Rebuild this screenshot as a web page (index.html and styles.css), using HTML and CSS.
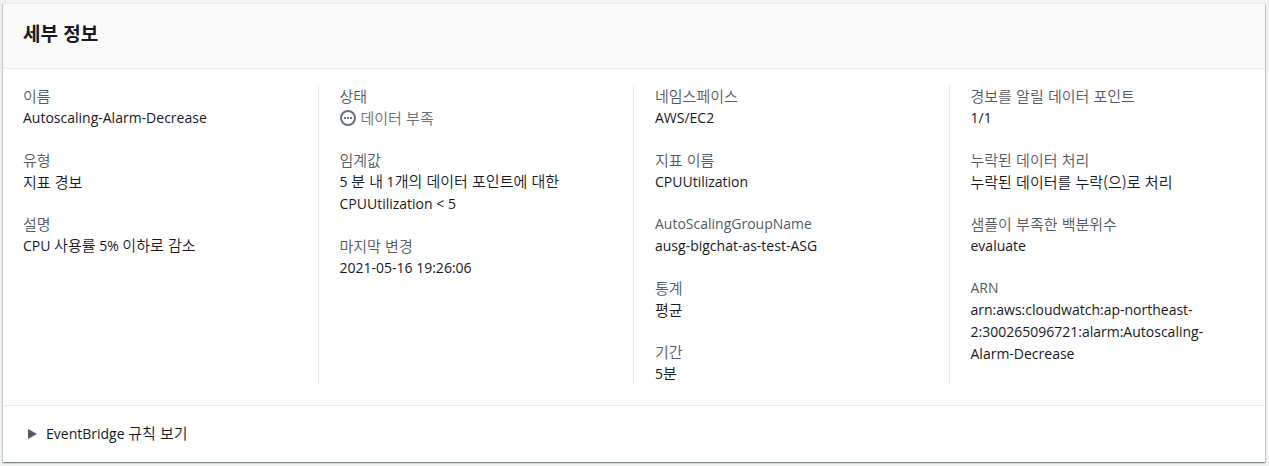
FILE: index.html
```html
<!DOCTYPE html>
<html lang="ko">
<head>
    <meta charset="UTF-8">
    <meta name="viewport" content="width=device-width, initial-scale=1.0">
    <title>세부 정보</title>
    <link rel="stylesheet" href="styles.css">
</head>
<body>

    <section class="card">
        <header class="card-header">
            <h2>세부 정보</h2>
        </header>

        <div class="columns">
            <!-- Alarm -->
            <dl class="column">
                <div class="field">
                    <dt class="ko">이름</dt>
                    <dd>Autoscaling-Alarm-Decrease</dd>
                </div>
                <div class="field">
                    <dt class="ko">유형</dt>
                    <dd class="ko">지표 경보</dd>
                </div>
                <div class="field">
                    <dt class="ko">설명</dt>
                    <dd>CPU <span class="ko">사용률</span> 5% <span class="ko">이하로 감소</span></dd>
                </div>
            </dl>

            <!-- State -->
            <dl class="column">
                <div class="field">
                    <dt class="ko">상태</dt>
                    <dd class="ko status">
                        <svg class="status-icon" viewBox="0 0 16 16" aria-hidden="true">
                            <circle cx="8" cy="8" r="7" fill="none" stroke="currentColor" stroke-width="2"/>
                            <path d="M4 7h2v2H4zM7 7h2v2H7zM10 7h2v2h-2z" fill="currentColor"/>
                        </svg>
                        데이터 부족
                    </dd>
                </div>
                <div class="field">
                    <dt class="ko">임계값</dt>
                    <dd>5 <span class="ko">분 내</span> 1<span class="ko">개의 데이터 포인트에 대한</span> CPUUtilization &lt; 5</dd>
                </div>
                <div class="field">
                    <dt class="ko">마지막 변경</dt>
                    <dd>2021-05-16 19:26:06</dd>
                </div>
            </dl>

            <!-- Metric -->
            <dl class="column">
                <div class="field">
                    <dt class="ko">네임스페이스</dt>
                    <dd>AWS/EC2</dd>
                </div>
                <div class="field">
                    <dt class="ko">지표 이름</dt>
                    <dd>CPUUtilization</dd>
                </div>
                <div class="field">
                    <dt>AutoScalingGroupName</dt>
                    <dd>ausg-bigchat-as-test-ASG</dd>
                </div>
                <div class="field">
                    <dt class="ko">통계</dt>
                    <dd class="ko">평균</dd>
                </div>
                <div class="field">
                    <dt class="ko">기간</dt>
                    <dd>5<span class="ko">분</span></dd>
                </div>
            </dl>

            <!-- Evaluation -->
            <dl class="column">
                <div class="field">
                    <dt class="ko">경보를 알릴 데이터 포인트</dt>
                    <dd>1/1</dd>
                </div>
                <div class="field">
                    <dt class="ko">누락된 데이터 처리</dt>
                    <dd class="ko">누락된 데이터를 누락(으)로 처리</dd>
                </div>
                <div class="field">
                    <dt class="ko">샘플이 부족한 백분위수</dt>
                    <dd>evaluate</dd>
                </div>
                <div class="field">
                    <dt>ARN</dt>
                    <dd>arn:aws:cloudwatch:ap-northeast-<wbr>2:300265096721:alarm:Autoscaling-<wbr>Alarm-Decrease</dd>
                </div>
            </dl>
        </div>

        <footer class="card-footer">
            <button type="button" class="expander" aria-expanded="false">
                <svg class="caret" viewBox="0 0 9 10" aria-hidden="true">
                    <path d="M0 0l9 5-9 5z" fill="currentColor"/>
                </svg>
                <span>EventBridge <span class="ko">규칙 보기</span></span>
            </button>
        </footer>
    </section>

</body>
</html>
```
FILE: styles.css
```css
* {
    box-sizing: border-box;
}
body {
    margin: 0;
    padding: 3px 4px 4px 3px;
    background-color: #f2f3f3;
    color: #16191f;
    font-family: "Open Sans", "Noto Sans CJK KR", sans-serif;
    font-size: 14px;
    line-height: 22px;
}
.card {
    background-color: #fff;
    border-top: 1px solid #eaeded;
    box-shadow: 0 1px 1px 0 rgba(0, 28, 36, 0.3), 1px 1px 1px 0 rgba(0, 28, 36, 0.15), -1px 1px 1px 0 rgba(0, 28, 36, 0.15);
}
.card-header {
    padding: 17px 20px 23px;
    background-color: #fafafa;
    border-bottom: 1px solid #eaeded;
}
.card-header h2 {
    margin: 0;
    font-family: "Noto Sans CJK KR", sans-serif;
    font-size: 19px;
    font-weight: 700;
    line-height: 24px;
}
.columns {
    display: grid;
    grid-template-columns: repeat(4, 1fr);
    padding: 16px 0 20px;
}
.column {
    display: flex;
    flex-direction: column;
    gap: 20px;
    margin: 0;
    padding: 0 20px;
    border-right: 1px solid #eaeded;
}
.column + .column {
    padding-left: 21px;
}
.column:last-child {
    border-right: 0;
}
.field dt {
    color: #545b64;
}
.field dd {
    margin: 0;
}
.ko {
    font-family: "Noto Sans CJK KR", sans-serif;
    font-size: 15px;
    font-weight: 350;
    line-height: 20px;
}
dt.ko, dd.ko {
    line-height: 22px;
}
.field .status {
    display: flex;
    align-items: center;
    gap: 5px;
    color: #687078;
}
.status-icon {
    width: 16px;
    height: 16px;
}
.card-footer {
    padding: 17px 25px;
    border-top: 1px solid #eaeded;
}
.expander {
    display: flex;
    align-items: center;
    gap: 9px;
    padding: 0;
    border: 0;
    background: none;
    color: inherit;
    font: inherit;
    cursor: pointer;
}
.caret {
    width: 9px;
    height: 10px;
    color: #545b64;
}
```
